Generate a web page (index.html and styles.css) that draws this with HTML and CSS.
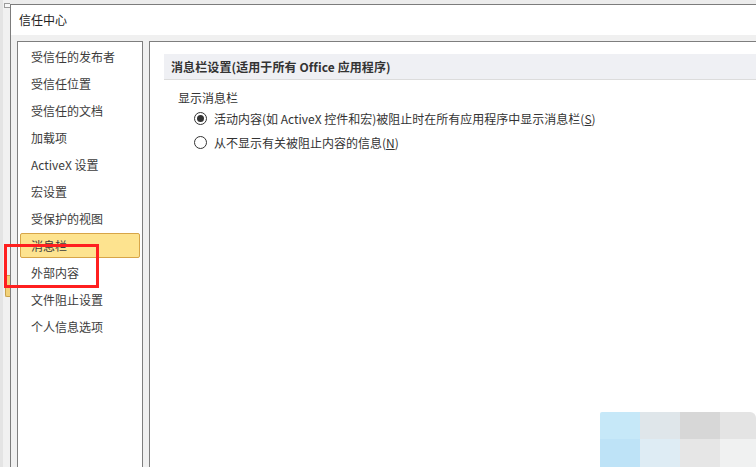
FILE: index.html
```html
<!DOCTYPE html>
<html lang="zh-CN">
<head>
<meta charset="utf-8">
<title>信任中心</title>
<link rel="stylesheet" href="styles.css">
</head>
<body>
<div class="desk">
  <div class="outside">
    <div class="corner"></div>
    <div class="tab"></div>
  </div>
  <div class="dialog">
    <div class="titlebar">信任中心</div>
    <div class="dialog-body">
      <ul class="nav">
        <li class="nav-item">受信任的发布者</li>
        <li class="nav-item">受信任位置</li>
        <li class="nav-item">受信任的文档</li>
        <li class="nav-item">加载项</li>
        <li class="nav-item">ActiveX 设置</li>
        <li class="nav-item">宏设置</li>
        <li class="nav-item">受保护的视图</li>
        <li class="nav-item selected">消息栏</li>
        <li class="nav-item">外部内容</li>
        <li class="nav-item">文件阻止设置</li>
        <li class="nav-item">个人信息选项</li>
      </ul>
      <div class="content">
        <div class="section-head">消息栏设置(适用于所有 Office 应用程序)</div>
        <div class="group-label">显示消息栏</div>
        <div class="radio-row"><span class="radio checked"></span><span>活动内容(如 ActiveX 控件和宏)被阻止时在所有应用程序中显示消息栏(<u>S</u>)</span></div>
        <div class="radio-row"><span class="radio"></span><span>从不显示有关被阻止内容的信息(<u>N</u>)</span></div>
      </div>
    </div>
  </div>
</div>
<div class="highlight"></div>
<div class="watermark">
  <div class="wm c1 top"></div><div class="wm c2 top"></div><div class="wm c3 top"></div><div class="wm c4 top"></div>
  <div class="wm c1 bot"></div><div class="wm c2 bot"></div><div class="wm c3 bot"></div><div class="wm c4 bot"></div>
</div>
</body>
</html>
```

FILE: styles.css
```css
* { box-sizing: border-box; }
html, body {
  margin: 0;
  padding: 0;
}
body {
  width: 756px;
  height: 467px;
  overflow: hidden;
  position: relative;
  background: #ececec;
  font-family: "Noto Sans CJK SC", "Noto Sans", sans-serif;
  font-size: 12px;
  color: #3a3a3a;
}
.desk {
  display: flex;
  height: 467px;
}
.outside {
  width: 10px;
  flex: none;
  background: linear-gradient(to right, #e4e4e4 0, #e4e4e4 3px, #f1f1f1 3px, #f1f1f1 100%);
  padding-top: 3px;
}
.corner {
  width: 6px;
  height: 5px;
  margin-left: 4px;
  border: 1px solid #9a9a9a;
  border-right: none;
  background: #f7f7f7;
}
.tab {
  width: 6px;
  height: 22px;
  margin-top: 267px;
  margin-left: 5px;
  background: #f2d27a;
  border: 1px solid #c9a24a;
  border-right: none;
  border-radius: 2px 0 0 2px;
}
.dialog {
  flex: 1;
  margin-top: 4px;
  border-left: 1px solid #7c7c7c;
  border-top: 1px solid #7c7c7c;
  background: #f0f0f0;
  display: flex;
  flex-direction: column;
}
.titlebar {
  height: 30px;
  background: #ffffff;
  padding-left: 8px;
  line-height: 29px;
  font-size: 12px;
  color: #222;
}
.dialog-body {
  flex: 1;
  display: flex;
  gap: 6px;
  padding: 6px 0 0 6px;
}
.nav {
  list-style: none;
  margin: 0;
  width: 126px;
  flex: none;
  background: #fff;
  border: 1px solid #7e7e7e;
  border-bottom: none;
  padding: 2px 2px 0 2px;
  display: flex;
  flex-direction: column;
  gap: 2px;
}
.nav-item {
  height: 25px;
  line-height: 24px;
  padding-left: 10px;
  border: 1px solid transparent;
  border-radius: 2px;
  color: #3c3c3c;
  white-space: nowrap;
}
.nav-item.selected {
  background: #fde38f;
  border-color: #d7a548;
}
.content {
  flex: 1;
  background: #fff;
  border: 1px solid #7e7e7e;
  border-right: none;
  border-bottom: none;
  padding: 12px 0 0 14px;
}
.section-head {
  height: 26px;
  background: #eff0f4;
  border-bottom: 1px solid #dcdcdc;
  padding-left: 7px;
  line-height: 25px;
  font-weight: bold;
  color: #333;
  white-space: nowrap;
  letter-spacing: 0.1px;
}
.group-label {
  margin-top: 9px;
  padding-left: 14px;
  line-height: 18px;
  color: #333;
}
.radio-row {
  display: flex;
  align-items: center;
  gap: 7px;
  height: 24px;
  padding-left: 30px;
  margin-top: -1px;
  color: #333;
  white-space: nowrap;
}
.radio-row + .radio-row { margin-top: 0; }
.radio {
  width: 13px;
  height: 13px;
  border: 1px solid #333;
  border-radius: 50%;
  background: #fff;
  flex: none;
  display: flex;
  align-items: center;
  justify-content: center;
}
.radio.checked::after {
  content: "";
  width: 7px;
  height: 7px;
  border-radius: 50%;
  background: #333;
}
.highlight {
  position: absolute;
  left: 4px;
  top: 244px;
  width: 95px;
  height: 44px;
  border: 3px solid #ff1f1f;
}
.watermark {
  position: absolute;
  left: 600px;
  top: 412px;
  width: 156px;
  height: 55px;
  display: grid;
  grid-template-columns: 40px 40px 40px 36px;
  grid-template-rows: 27px 28px;
}
.wm.c1.top { background: #c6e8f8; border-radius: 2px 0 0 0; }
.wm.c1.bot { background: #bee3f7; }
.wm.c2.top { background: #dfe6ea; }
.wm.c2.bot { background: #deecf4; }
.wm.c3.top { background: #d7d7d7; }
.wm.c3.bot { background: #e6e6e6; }
.wm.c4.top { background: #e4e4e4; border-radius: 0 6px 0 0; }
.wm.c4.bot { background: #f0f1f1; }
```
